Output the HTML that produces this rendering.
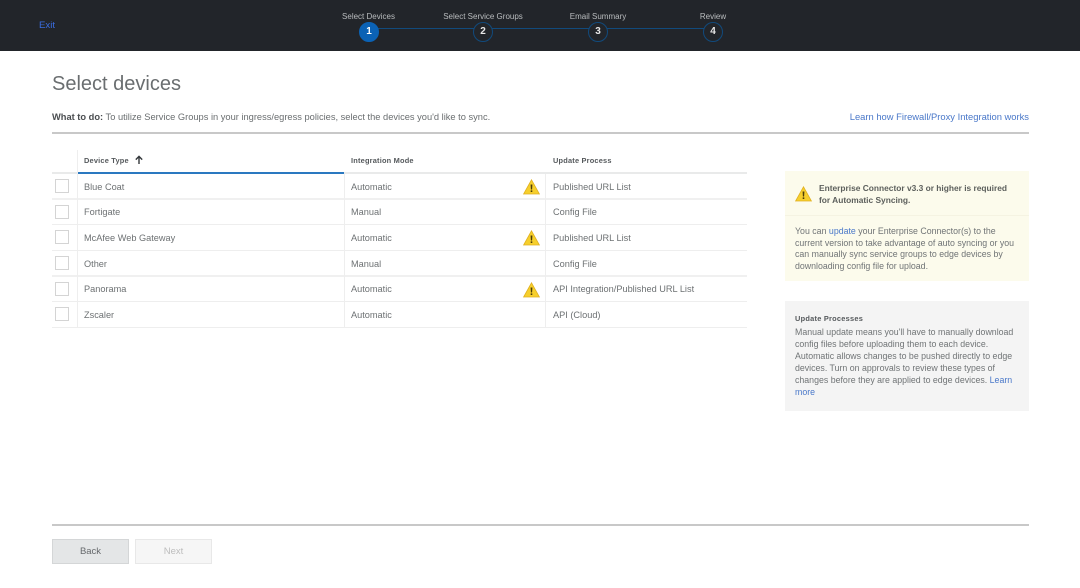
<!DOCTYPE html>
<html><head><meta charset="utf-8">
<style>
html,body{margin:0;padding:0;background:#fff}
#p{position:relative;width:1080px;height:588px;overflow:hidden;background:#fff;font-family:"Liberation Sans",sans-serif;color:#6a6e70;font-size:9.2px}
.t{position:absolute;white-space:nowrap;line-height:14px}
.c{transform:translateX(-50%)}
.b{position:absolute}
.h{font-weight:bold;font-size:7.4px;color:#55595c;letter-spacing:.2px}
.r{font-size:9.2px;color:#6d7173}
.cb{position:absolute;left:55px;width:12px;height:12px;border:1px solid #d4d4d4;background:#fff}
.st{color:#b9bcbe;font-size:8px}
.n{position:absolute;box-sizing:border-box;width:20px;height:20px;border-radius:50%;border:1.5px solid #114a7c;background:#22252a;color:#e8e8e8;font-weight:bold;font-size:10px;line-height:18px;text-align:center;top:22px}
a{color:#4a78c9;text-decoration:none}
.ln{font-size:8.8px;line-height:12px;color:#707476}
</style></head><body>
<div id="p">
<div class="b" style="left:0;top:0;width:1080px;height:51px;background:#22252a"></div>
<div class="t" style="left:39px;top:18.5px;color:#3a6de0;font-size:9.6px">Exit</div>
<div class="b" style="left:368px;top:28px;width:345px;height:1px;background:#114a7c"></div>
<div class="t c st" style="left:368.5px;top:9.5px">Select Devices</div>
<div class="t c st" style="left:483px;top:9.5px">Select Service Groups</div>
<div class="t c st" style="left:598px;top:9.5px">Email Summary</div>
<div class="t c st" style="left:713px;top:9.5px">Review</div>
<div class="n" style="left:359px;background:#0b62b5;border-color:#0b62b5;color:#fff">1</div>
<div class="n" style="left:473px">2</div>
<div class="n" style="left:588px">3</div>
<div class="n" style="left:703px">4</div>

<div class="t" style="left:52px;top:70px;font-size:20px;line-height:28px;color:#6a6e70">Select devices</div>
<div class="t" style="left:52px;top:110px;font-size:9.3px;color:#6a6e70"><b style="color:#4a4d50">What to do:</b> To utilize Service Groups in your ingress/egress policies, select the devices you'd like to sync.</div>
<div class="t" style="right:51px;top:110px;font-size:9.4px;color:#4a78c9">Learn how Firewall/Proxy Integration works</div>
<div class="b" style="left:52px;top:132px;width:977px;height:2px;background:#c8c8c8"></div>

<div class="t h" style="left:84px;top:154px">Device Type</div>
<svg class="b" style="left:134px;top:155px" width="10" height="10" viewBox="0 0 10 10"><path d="M5 9V2M1.8 4.6L5 1.4l3.2 3.2" fill="none" stroke="#33373a" stroke-width="1.4"/></svg>
<div class="t h" style="left:351px;top:154px">Integration Mode</div>
<div class="t h" style="left:553px;top:154px">Update Process</div>

<div class="b" style="left:52px;top:172px;width:695px;height:2px;background:#e9eaea"></div>
<div class="b" style="left:77px;top:172px;width:267px;height:2px;background:#2a78c0"></div>
<div class="b" style="left:52px;top:198px;width:695px;height:2px;background:#f0f0f0"></div>
<div class="b" style="left:52px;top:224px;width:695px;height:1px;background:#eeeeee"></div>
<div class="b" style="left:52px;top:250px;width:695px;height:1px;background:#eeeeee"></div>
<div class="b" style="left:52px;top:275px;width:695px;height:2px;background:#f0f0f0"></div>
<div class="b" style="left:52px;top:301px;width:695px;height:1px;background:#eeeeee"></div>
<div class="b" style="left:52px;top:327px;width:695px;height:1px;background:#eeeeee"></div>
<div class="b" style="left:77px;top:150px;width:1px;height:177px;background:#eeeeee"></div>
<div class="b" style="left:344px;top:174px;width:1px;height:153px;background:#eeeeee"></div>
<div class="b" style="left:545px;top:174px;width:1px;height:153px;background:#eeeeee"></div>

<div class="cb" style="top:179px"></div>
<div class="cb" style="top:205px"></div>
<div class="cb" style="top:230px"></div>
<div class="cb" style="top:256px"></div>
<div class="cb" style="top:282px"></div>
<div class="cb" style="top:307px"></div>

<div class="t r" style="left:84px;top:180px">Blue Coat</div>
<div class="t r" style="left:84px;top:205px">Fortigate</div>
<div class="t r" style="left:84px;top:231px">McAfee Web Gateway</div>
<div class="t r" style="left:84px;top:257px">Other</div>
<div class="t r" style="left:84px;top:282px">Panorama</div>
<div class="t r" style="left:84px;top:308px">Zscaler</div>

<div class="t r" style="left:351px;top:180px">Automatic</div>
<div class="t r" style="left:351px;top:205px">Manual</div>
<div class="t r" style="left:351px;top:231px">Automatic</div>
<div class="t r" style="left:351px;top:257px">Manual</div>
<div class="t r" style="left:351px;top:282px">Automatic</div>
<div class="t r" style="left:351px;top:308px">Automatic</div>

<div class="t r" style="left:553px;top:180px">Published URL List</div>
<div class="t r" style="left:553px;top:205px">Config File</div>
<div class="t r" style="left:553px;top:231px">Published URL List</div>
<div class="t r" style="left:553px;top:257px">Config File</div>
<div class="t r" style="left:553px;top:282px">API Integration/Published URL List</div>
<div class="t r" style="left:553px;top:308px">API (Cloud)</div>

<svg class="b" style="left:523px;top:179px" width="17" height="16" viewBox="0 0 17 16"><path d="M8.5 .8L16.4 15H.6Z" fill="#f6cf2c" stroke="#e0b020" stroke-width=".8"/><path d="M7.6 5.5h1.8l-.3 5H7.9zM7.7 11.4h1.6V13H7.7z" fill="#4a3c08"/></svg>
<svg class="b" style="left:523px;top:230px" width="17" height="16" viewBox="0 0 17 16"><path d="M8.5 .8L16.4 15H.6Z" fill="#f6cf2c" stroke="#e0b020" stroke-width=".8"/><path d="M7.6 5.5h1.8l-.3 5H7.9zM7.7 11.4h1.6V13H7.7z" fill="#4a3c08"/></svg>
<svg class="b" style="left:523px;top:282px" width="17" height="16" viewBox="0 0 17 16"><path d="M8.5 .8L16.4 15H.6Z" fill="#f6cf2c" stroke="#e0b020" stroke-width=".8"/><path d="M7.6 5.5h1.8l-.3 5H7.9zM7.7 11.4h1.6V13H7.7z" fill="#4a3c08"/></svg>

<div class="b" style="left:785px;top:171px;width:244px;height:110px;background:#fcfbec"></div>
<div class="b" style="left:785px;top:215px;width:244px;height:1px;background:#f5f3e2"></div>
<svg class="b" style="left:795px;top:186px" width="17" height="16" viewBox="0 0 17 16"><path d="M8.5 .8L16.4 15H.6Z" fill="#f6cf2c" stroke="#e0b020" stroke-width=".8"/><path d="M7.6 5.5h1.8l-.3 5H7.9zM7.7 11.4h1.6V13H7.7z" fill="#4a3c08"/></svg>
<div class="t" style="left:819px;top:181.5px;font-size:8.4px;line-height:12px;font-weight:bold;color:#5c5f5c">Enterprise Connector v3.3 or higher is required</div>
<div class="t" style="left:819px;top:193.5px;font-size:8.4px;line-height:12px;font-weight:bold;color:#5c5f5c">for Automatic Syncing.</div>
<div class="t ln" style="left:795px;top:225px">You can <a href="#">update</a> your Enterprise Connector(s) to the</div>
<div class="t ln" style="left:795px;top:237px">current version to take advantage of auto syncing or you</div>
<div class="t ln" style="left:795px;top:248px">can manually sync service groups to edge devices by</div>
<div class="t ln" style="left:795px;top:260px">downloading config file for upload.</div>

<div class="b" style="left:785px;top:301px;width:244px;height:110px;background:#f4f4f4"></div>
<div class="t" style="left:795px;top:313px;font-size:7.4px;line-height:12px;font-weight:bold;color:#55595c;letter-spacing:.25px">Update Processes</div>
<div class="t ln" style="left:795px;top:326px">Manual update means you'll have to manually download</div>
<div class="t ln" style="left:795px;top:338px">config files before uploading them to each device.</div>
<div class="t ln" style="left:795px;top:350px">Automatic allows changes to be pushed directly to edge</div>
<div class="t ln" style="left:795px;top:362px">devices. Turn on approvals to review these types of</div>
<div class="t ln" style="left:795px;top:374px">changes before they are applied to edge devices. <a href="#">Learn</a></div>
<div class="t ln" style="left:795px;top:386px"><a href="#">more</a></div>

<div class="b" style="left:52px;top:524px;width:977px;height:2px;background:#c8c8c8"></div>
<div class="b" style="left:52px;top:539px;width:75px;height:23px;background:#e4e6e7;border:1px solid #d4d6d7;text-align:center;line-height:24px;font-size:9.5px;color:#66696c">Back</div>
<div class="b" style="left:135px;top:539px;width:75px;height:23px;background:#f6f6f6;border:1px solid #e8e8e8;text-align:center;line-height:24px;font-size:9.5px;color:#bdbdbd">Next</div>
</div>
</body></html>
